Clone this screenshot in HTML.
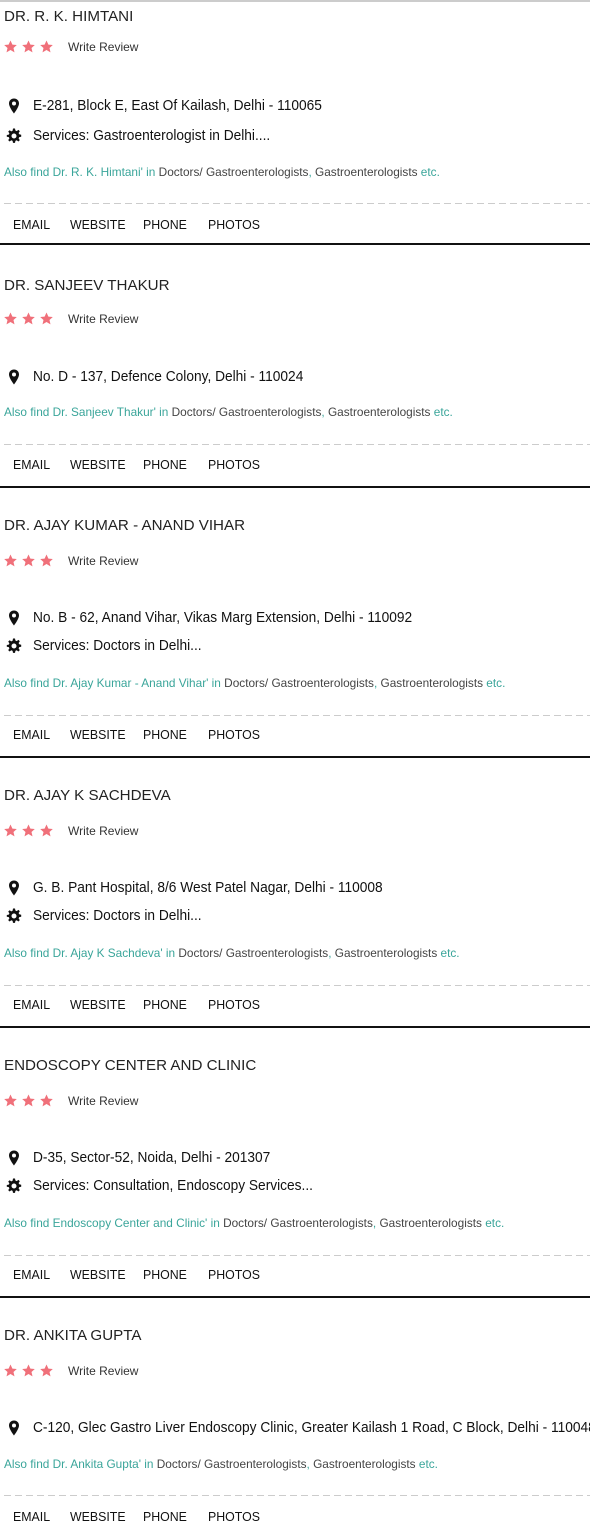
<!DOCTYPE html>
<html><head><meta charset="utf-8"><style>
*{margin:0;padding:0;box-sizing:border-box}
body{width:590px;height:1536px;position:relative;overflow:hidden;background:#fff;font-family:"Liberation Sans",sans-serif;color:#111}
.l{position:absolute;left:0;height:20px;line-height:20px;white-space:nowrap;transform-origin:0 50%}
.t{left:4px;font-size:15px;color:#222;transform:scaleX(1.01)}
.s{left:4px;display:flex;align-items:center}
.s svg{margin-right:5px}
.wr{font-size:12px;color:#333;margin-left:9px}
.a{left:33px;font-size:15px;color:#111;transform:scaleX(0.915)}
.ic{position:absolute;left:6px;width:16px;height:16px}
.f{left:4px;font-size:12px;color:#444;transform:scaleX(0.985)}
.f b{font-weight:normal;color:#3aa59a}
.d{position:absolute;left:4px;right:0;height:1px;background:repeating-linear-gradient(90deg,#ccc 0 7px,transparent 7px 11px)}
.bt{font-size:13px;color:#111;transform:scaleX(0.95)}
.br{position:absolute;left:0;right:0;height:2px;background:#111}
</style></head><body>
<div style="position:absolute;left:0;right:0;top:0;height:2px;background:#ccc"></div>

<!-- Card 1 -->
<div class="l t" style="top:7px">DR. R. K. HIMTANI</div>
<div class="l s" style="top:37px"><svg width="50" height="14" viewBox="0 0 50 14"><g fill="#f0707a"><path id="st" d="M6.5 0.5l1.9 4.1 4.4.4-3.3 3 1 4.4-4-2.4-4 2.4 1-4.4-3.3-3 4.4-.4z"/><use href="#st" x="18"/><use href="#st" x="36"/></g></svg><span class="wr">Write Review</span></div>
<svg class="ic" style="top:98px" viewBox="0 0 16 16"><path d="M8 0.5C5 0.5 3 2.7 3 5.5c0 3.5 5 10 5 10s5-6.5 5-10c0-2.8-2-5-5-5zm0 7a2 2 0 1 1 0-4 2 2 0 0 1 0 4z" fill="#111"/></svg>
<div class="l a" style="top:96px">E-281, Block E, East Of Kailash, Delhi - 110065</div>
<svg class="ic" style="top:128px" viewBox="0 0 16 16"><path id="gear" d="M7 0.5h2l.4 2 1.3.6 1.7-1.2 1.4 1.4-1.2 1.7.6 1.3 2 .4v2l-2 .4-.6 1.3 1.2 1.7-1.4 1.4-1.7-1.2-1.3.6-.4 2H7l-.4-2-1.3-.6-1.700 1.2-1.4-1.4 1.2-1.7-.6-1.3-2-.4V7l2-.4.6-1.3-1.2-1.7 1.4-1.4 1.7 1.2 1.3-.6zM8 5.5a2.5 2.5 0 1 0 0 5 2.5 2.5 0 0 0 0-5z" fill="#111" fill-rule="evenodd"/></svg>
<div class="l a" style="top:126px">Services: Gastroenterologist in Delhi....</div>
<div class="l f" style="top:162px"><b>Also find Dr. R. K. Himtani' in</b> Doctors/ Gastroenterologists<b>,</b> Gastroenterologists <b>etc.</b></div>
<div class="d" style="top:203px"></div>
<div class="l bt" style="top:215px;left:13px">EMAIL</div><div class="l bt" style="top:215px;left:70px">WEBSITE</div><div class="l bt" style="top:215px;left:143px">PHONE</div><div class="l bt" style="top:215px;left:208px">PHOTOS</div>
<div class="br" style="top:243px"></div>

<!-- Card 2 -->
<div class="l t" style="top:276px">DR. SANJEEV THAKUR</div>
<div class="l s" style="top:309px"><svg width="50" height="14" viewBox="0 0 50 14"><g fill="#f0707a"><use href="#st"/><use href="#st" x="18"/><use href="#st" x="36"/></g></svg><span class="wr">Write Review</span></div>
<svg class="ic" style="top:369px" viewBox="0 0 16 16"><path d="M8 0.5C5 0.5 3 2.7 3 5.5c0 3.5 5 10 5 10s5-6.5 5-10c0-2.8-2-5-5-5zm0 7a2 2 0 1 1 0-4 2 2 0 0 1 0 4z" fill="#111"/></svg>
<div class="l a" style="top:367px">No. D - 137, Defence Colony, Delhi - 110024</div>
<div class="l f" style="top:402px"><b>Also find Dr. Sanjeev Thakur' in</b> Doctors/ Gastroenterologists<b>,</b> Gastroenterologists <b>etc.</b></div>
<div class="d" style="top:444px"></div>
<div class="l bt" style="top:455px;left:13px">EMAIL</div><div class="l bt" style="top:455px;left:70px">WEBSITE</div><div class="l bt" style="top:455px;left:143px">PHONE</div><div class="l bt" style="top:455px;left:208px">PHOTOS</div>
<div class="br" style="top:486px"></div>

<!-- Card 3 -->
<div class="l t" style="top:516px">DR. AJAY KUMAR - ANAND VIHAR</div>
<div class="l s" style="top:551px"><svg width="50" height="14" viewBox="0 0 50 14"><g fill="#f0707a"><use href="#st"/><use href="#st" x="18"/><use href="#st" x="36"/></g></svg><span class="wr">Write Review</span></div>
<svg class="ic" style="top:610px" viewBox="0 0 16 16"><path d="M8 0.5C5 0.5 3 2.7 3 5.5c0 3.5 5 10 5 10s5-6.5 5-10c0-2.8-2-5-5-5zm0 7a2 2 0 1 1 0-4 2 2 0 0 1 0 4z" fill="#111"/></svg>
<div class="l a" style="top:608px">No. B - 62, Anand Vihar, Vikas Marg Extension, Delhi - 110092</div>
<svg class="ic" style="top:638px" viewBox="0 0 16 16"><use href="#gear"/></svg>
<div class="l a" style="top:636px">Services: Doctors in Delhi...</div>
<div class="l f" style="top:673px"><b>Also find Dr. Ajay Kumar - Anand Vihar' in</b> Doctors/ Gastroenterologists<b>,</b> Gastroenterologists <b>etc.</b></div>
<div class="d" style="top:715px"></div>
<div class="l bt" style="top:725px;left:13px">EMAIL</div><div class="l bt" style="top:725px;left:70px">WEBSITE</div><div class="l bt" style="top:725px;left:143px">PHONE</div><div class="l bt" style="top:725px;left:208px">PHOTOS</div>
<div class="br" style="top:756px"></div>

<!-- Card 4 -->
<div class="l t" style="top:786px">DR. AJAY K SACHDEVA</div>
<div class="l s" style="top:821px"><svg width="50" height="14" viewBox="0 0 50 14"><g fill="#f0707a"><use href="#st"/><use href="#st" x="18"/><use href="#st" x="36"/></g></svg><span class="wr">Write Review</span></div>
<svg class="ic" style="top:880px" viewBox="0 0 16 16"><path d="M8 0.5C5 0.5 3 2.7 3 5.5c0 3.5 5 10 5 10s5-6.5 5-10c0-2.8-2-5-5-5zm0 7a2 2 0 1 1 0-4 2 2 0 0 1 0 4z" fill="#111"/></svg>
<div class="l a" style="top:878px">G. B. Pant Hospital, 8/6 West Patel Nagar, Delhi - 110008</div>
<svg class="ic" style="top:908px" viewBox="0 0 16 16"><use href="#gear"/></svg>
<div class="l a" style="top:906px">Services: Doctors in Delhi...</div>
<div class="l f" style="top:943px"><b>Also find Dr. Ajay K Sachdeva' in</b> Doctors/ Gastroenterologists<b>,</b> Gastroenterologists <b>etc.</b></div>
<div class="d" style="top:985px"></div>
<div class="l bt" style="top:995px;left:13px">EMAIL</div><div class="l bt" style="top:995px;left:70px">WEBSITE</div><div class="l bt" style="top:995px;left:143px">PHONE</div><div class="l bt" style="top:995px;left:208px">PHOTOS</div>
<div class="br" style="top:1026px"></div>

<!-- Card 5 -->
<div class="l t" style="top:1056px">ENDOSCOPY CENTER AND CLINIC</div>
<div class="l s" style="top:1091px"><svg width="50" height="14" viewBox="0 0 50 14"><g fill="#f0707a"><use href="#st"/><use href="#st" x="18"/><use href="#st" x="36"/></g></svg><span class="wr">Write Review</span></div>
<svg class="ic" style="top:1150px" viewBox="0 0 16 16"><path d="M8 0.5C5 0.5 3 2.7 3 5.5c0 3.5 5 10 5 10s5-6.5 5-10c0-2.8-2-5-5-5zm0 7a2 2 0 1 1 0-4 2 2 0 0 1 0 4z" fill="#111"/></svg>
<div class="l a" style="top:1148px">D-35, Sector-52, Noida, Delhi - 201307</div>
<svg class="ic" style="top:1178px" viewBox="0 0 16 16"><use href="#gear"/></svg>
<div class="l a" style="top:1176px">Services: Consultation, Endoscopy Services...</div>
<div class="l f" style="top:1213px"><b>Also find Endoscopy Center and Clinic' in</b> Doctors/ Gastroenterologists<b>,</b> Gastroenterologists <b>etc.</b></div>
<div class="d" style="top:1255px"></div>
<div class="l bt" style="top:1265px;left:13px">EMAIL</div><div class="l bt" style="top:1265px;left:70px">WEBSITE</div><div class="l bt" style="top:1265px;left:143px">PHONE</div><div class="l bt" style="top:1265px;left:208px">PHOTOS</div>
<div class="br" style="top:1296px"></div>

<!-- Card 6 -->
<div class="l t" style="top:1326px">DR. ANKITA GUPTA</div>
<div class="l s" style="top:1361px"><svg width="50" height="14" viewBox="0 0 50 14"><g fill="#f0707a"><use href="#st"/><use href="#st" x="18"/><use href="#st" x="36"/></g></svg><span class="wr">Write Review</span></div>
<svg class="ic" style="top:1420px" viewBox="0 0 16 16"><path d="M8 0.5C5 0.5 3 2.7 3 5.5c0 3.5 5 10 5 10s5-6.5 5-10c0-2.8-2-5-5-5zm0 7a2 2 0 1 1 0-4 2 2 0 0 1 0 4z" fill="#111"/></svg>
<div class="l a" style="top:1418px">C-120, Glec Gastro Liver Endoscopy Clinic, Greater Kailash 1 Road, C Block, Delhi - 110048</div>
<div class="l f" style="top:1454px"><b>Also find Dr. Ankita Gupta' in</b> Doctors/ Gastroenterologists<b>,</b> Gastroenterologists <b>etc.</b></div>
<div class="d" style="top:1495px"></div>
<div class="l bt" style="top:1507px;left:13px">EMAIL</div><div class="l bt" style="top:1507px;left:70px">WEBSITE</div><div class="l bt" style="top:1507px;left:143px">PHONE</div><div class="l bt" style="top:1507px;left:208px">PHOTOS</div>
</body></html>
